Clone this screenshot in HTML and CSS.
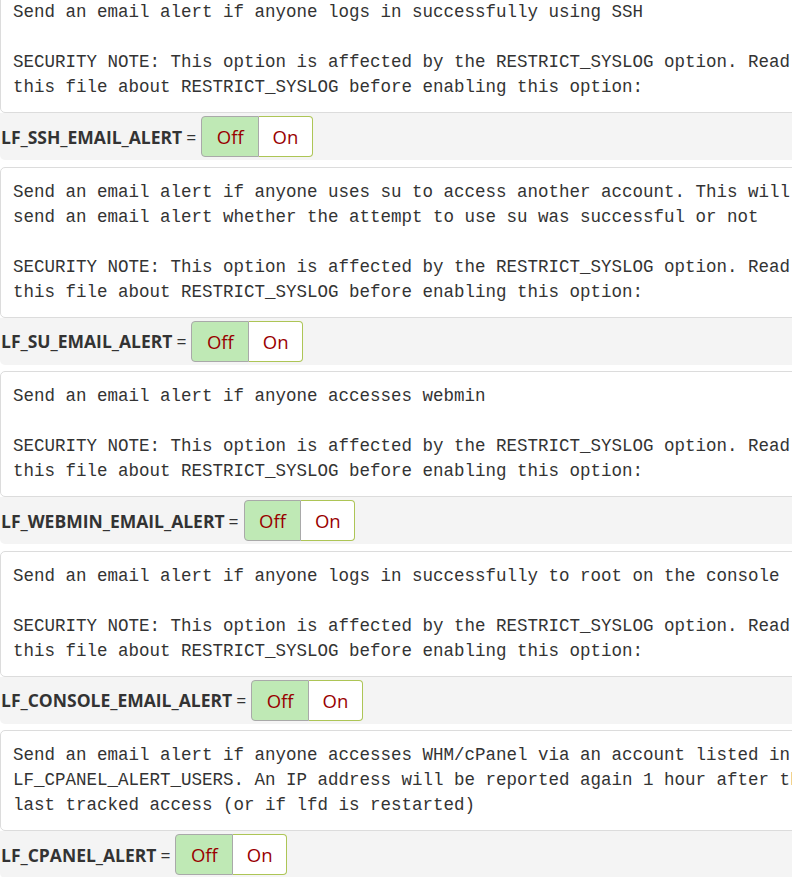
FILE: index.html
```html
<!DOCTYPE html>
<html>
  <head>
    <link rel="stylesheet" href="styles.css">
  </head>
  <body>
    <div class="options">
      <div class="option">
        <pre class="comment">Send an email alert if anyone logs in successfully using SSH

SECURITY NOTE: This option is affected by the RESTRICT_SYSLOG option. Read
this file about RESTRICT_SYSLOG before enabling this option:</pre>
        <div class="setting">
          <span class="name">LF_SSH_EMAIL_ALERT</span> =
          <div class="toggle">
            <button class="btn off active">Off</button><button class="btn on">On</button>
          </div>
        </div>
      </div>
      <div class="option">
        <pre class="comment">Send an email alert if anyone uses su to access another account. This will
send an email alert whether the attempt to use su was successful or not

SECURITY NOTE: This option is affected by the RESTRICT_SYSLOG option. Read
this file about RESTRICT_SYSLOG before enabling this option:</pre>
        <div class="setting">
          <span class="name">LF_SU_EMAIL_ALERT</span> =
          <div class="toggle">
            <button class="btn off active">Off</button><button class="btn on">On</button>
          </div>
        </div>
      </div>
      <div class="option">
        <pre class="comment">Send an email alert if anyone accesses webmin

SECURITY NOTE: This option is affected by the RESTRICT_SYSLOG option. Read
this file about RESTRICT_SYSLOG before enabling this option:</pre>
        <div class="setting">
          <span class="name">LF_WEBMIN_EMAIL_ALERT</span> =
          <div class="toggle">
            <button class="btn off active">Off</button><button class="btn on">On</button>
          </div>
        </div>
      </div>
      <div class="option">
        <pre class="comment">Send an email alert if anyone logs in successfully to root on the console

SECURITY NOTE: This option is affected by the RESTRICT_SYSLOG option. Read
this file about RESTRICT_SYSLOG before enabling this option:</pre>
        <div class="setting">
          <span class="name">LF_CONSOLE_EMAIL_ALERT</span> =
          <div class="toggle">
            <button class="btn off active">Off</button><button class="btn on">On</button>
          </div>
        </div>
      </div>
      <div class="option">
        <pre class="comment">Send an email alert if anyone accesses WHM/cPanel via an account listed in
LF_CPANEL_ALERT_USERS. An IP address will be reported again 1 hour after the
last tracked access (or if lfd is restarted)</pre>
        <div class="setting">
          <span class="name">LF_CPANEL_ALERT</span> =
          <div class="toggle">
            <button class="btn off active">Off</button><button class="btn on">On</button>
          </div>
        </div>
      </div>
    </div>
  </body>
</html>
```
FILE: styles.css
```css
/* csf config options */
html, body {
  overflow: hidden;
}
body {
  margin: 0;
  font-family: "Open Sans", Arial, sans-serif;
  color: #333;
  background-color: #fff;
}
.options {
  width: 880px;
  margin-top: -13px;
}
.option {
  margin-bottom: 6.5px;
}
.comment {
  margin: 0;
  padding: 12px;
  font-family: "Liberation Mono", "Courier New", monospace;
  font-size: 17.5px;
  line-height: 25px;
  color: #333;
  background-color: #fff;
  border: 1px solid #dcdcdc;
  border-radius: 5px;
  white-space: pre;
}
.setting {
  display: flex;
  align-items: center;
  height: 47px;
  padding-left: 1px;
  background-color: #f4f4f4;
  border-radius: 0 0 5px 5px;
  font-size: 17.5px;
}
.name {
  font-weight: bold;
  margin-right: 4px;
}
.toggle {
  display: flex;
  margin-left: 5px;
}
.btn {
  height: 41px;
  padding: 0 14.5px;
  font-family: "Open Sans", Arial, sans-serif;
  font-size: 18.5px;
  color: #990000;
  background-color: #fff;
  cursor: pointer;
}
.btn.off {
  background-color: #bfe9b5;
  border: 1px solid #a9a9a9;
  border-radius: 4px 0 0 4px;
}
.btn.on {
  border: 1px solid #adc556;
  border-left: none;
  border-radius: 0 4px 4px 0;
  padding: 0 13.5px;
}
```
